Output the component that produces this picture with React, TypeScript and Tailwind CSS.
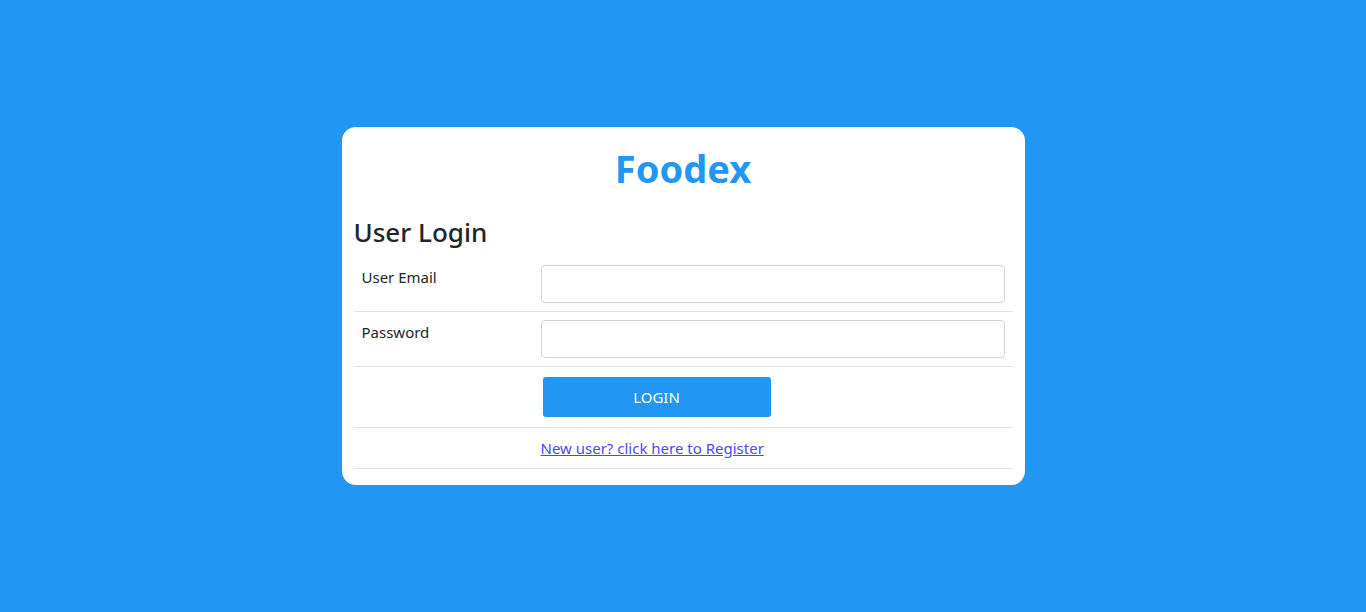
export default function App() {
  return (
    <div className="min-h-[612px] w-full bg-[#2196f3] flex items-start justify-center pt-[127px] [font-family:'Noto_Sans',sans-serif] text-[#212529]">
      <div className="w-[683px] bg-white rounded-[14px] px-3 pt-[12px] pb-4">
        <h1 className="text-center text-[38px] leading-[48px] font-bold text-[#2196f3] mt-[5px]">Foodex</h1>
        <h3 className="text-[26px] leading-[34px] font-medium mt-[23px] mb-[8px]">User Login</h3>
        <div className="text-[15px]">
          <div className="grid grid-cols-[179px_1fr] border-b border-[#dee2e6]">
            <div className="p-2 leading-[24px]">User Email</div>
            <div className="p-2">
              <input className="w-full h-[38px] border border-[#ced4da] rounded-[4px] px-3 outline-none" />
            </div>
          </div>
          <div className="grid grid-cols-[179px_1fr] border-b border-[#dee2e6]">
            <div className="p-2 leading-[24px]">Password</div>
            <div className="p-2">
              <input type="password" className="w-full h-[38px] border border-[#ced4da] rounded-[4px] px-3 outline-none" />
            </div>
          </div>
          <div className="grid grid-cols-[179px_1fr] border-b border-[#dee2e6]">
            <div className="p-2"></div>
            <div className="p-2">
              <button className="m-[2px] w-[228px] h-[40px] bg-[#2196f3] text-white rounded-[3px] text-[15px]">LOGIN</button>
            </div>
          </div>
          <div className="grid grid-cols-[179px_1fr] border-b border-[#dee2e6]">
            <div className="p-2"></div>
            <div className="p-2 leading-[24px]">
              <a href="#" className="underline text-[#4a4aef]">New user? click here to Register</a>
            </div>
          </div>
        </div>
      </div>
    </div>
  );
}
